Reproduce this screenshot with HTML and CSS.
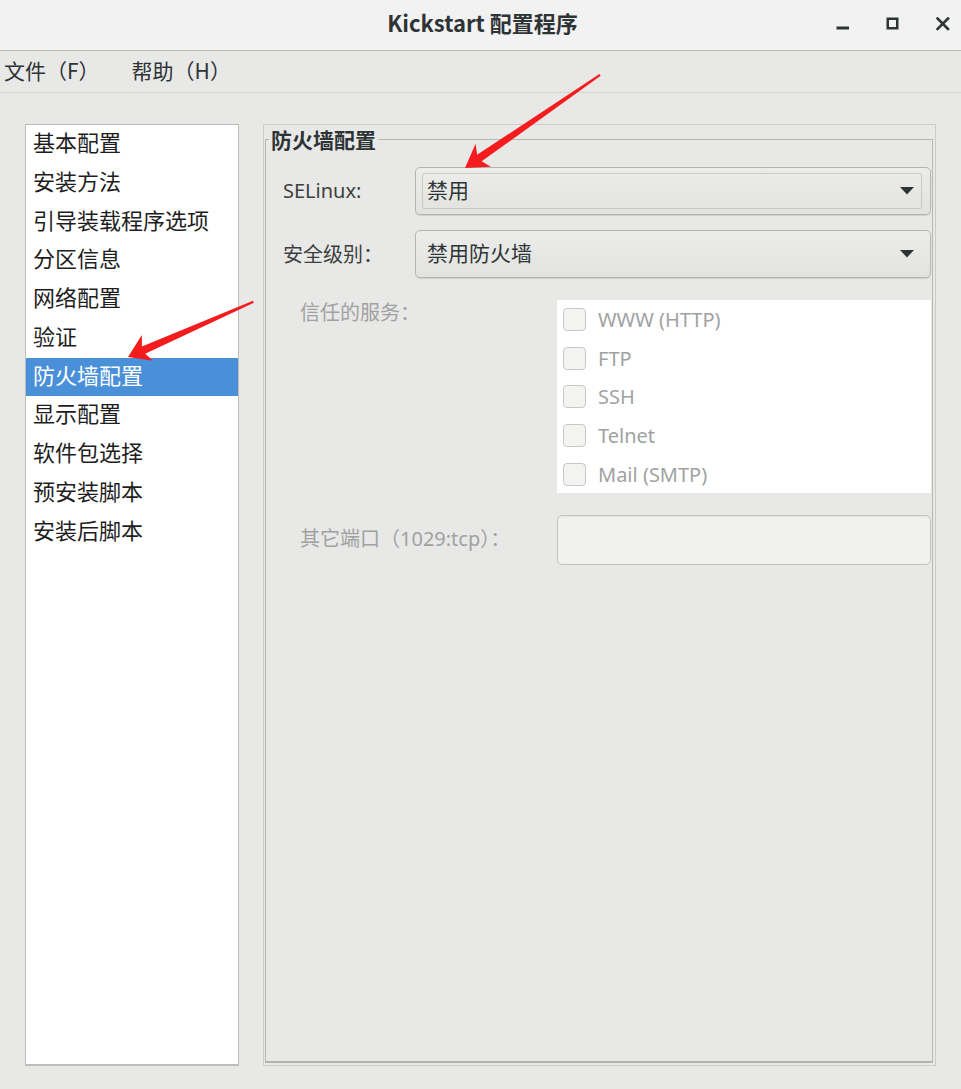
FILE: index.html
```html
<!DOCTYPE html>
<html lang="zh-CN">
<head>
<meta charset="utf-8">
<title>Kickstart 配置程序</title>
<link rel="stylesheet" href="styles.css">
</head>
<body>
<div class="window">
  <header class="titlebar">
    <div class="title-spacer"></div>
    <div class="title">Kickstart 配置程序</div>
    <div class="wm-buttons">
      <span class="wm-btn">
        <svg width="14" height="14" viewBox="0 0 14 14"><rect x="0.5" y="9.5" width="12.5" height="3" fill="#2e3436"/></svg>
      </span>
      <span class="wm-btn">
        <svg width="14" height="14" viewBox="0 0 14 14"><rect x="1.75" y="1.75" width="9.5" height="9.5" fill="none" stroke="#2e3436" stroke-width="2.5"/></svg>
      </span>
      <span class="wm-btn">
        <svg width="14" height="14" viewBox="0 0 14 14"><path d="M1.5 1.5 L12 12 M12 1.5 L1.5 12" stroke="#2e3436" stroke-width="2.6" stroke-linecap="square"/></svg>
      </span>
    </div>
  </header>

  <nav class="menubar">
    <span class="menu-item">文件（F）</span>
    <span class="menu-item">帮助（H）</span>
  </nav>

  <main class="content">
    <ul class="sidebar">
      <li class="side-item">基本配置</li>
      <li class="side-item">安装方法</li>
      <li class="side-item">引导装载程序选项</li>
      <li class="side-item">分区信息</li>
      <li class="side-item">网络配置</li>
      <li class="side-item">验证</li>
      <li class="side-item selected">防火墙配置</li>
      <li class="side-item">显示配置</li>
      <li class="side-item">软件包选择</li>
      <li class="side-item">预安装脚本</li>
      <li class="side-item">安装后脚本</li>
    </ul>

    <section class="panel">
      <fieldset class="frame">
        <legend class="frame-title">防火墙配置</legend>

        <div class="row row-combo">
          <span class="field-label">SELinux:</span>
          <div class="combo">
            <div class="combo-focus">
              <span class="combo-text">禁用</span>
              <svg class="combo-arrow" width="14" height="8" viewBox="0 0 14 8"><path d="M0 0 H14 L7 7.5 Z" fill="#2e3436"/></svg>
            </div>
          </div>
        </div>

        <div class="row row-combo">
          <span class="field-label">安全级别：</span>
          <div class="combo">
            <div class="combo-plain">
              <span class="combo-text">禁用防火墙</span>
              <svg class="combo-arrow" width="14" height="8" viewBox="0 0 14 8"><path d="M0 0 H14 L7 7.5 Z" fill="#2e3436"/></svg>
            </div>
          </div>
        </div>

        <div class="row row-wide row-services">
          <span class="field-label insensitive">信任的服务：</span>
          <div class="services">
            <label class="check-row"><span class="check-box"></span><span class="check-label">WWW (HTTP)</span></label>
            <label class="check-row"><span class="check-box"></span><span class="check-label">FTP</span></label>
            <label class="check-row"><span class="check-box"></span><span class="check-label">SSH</span></label>
            <label class="check-row"><span class="check-box"></span><span class="check-label">Telnet</span></label>
            <label class="check-row"><span class="check-box"></span><span class="check-label">Mail (SMTP)</span></label>
          </div>
        </div>

        <div class="row row-wide row-port">
          <span class="field-label insensitive">其它端口（1029:tcp）：</span>
          <div class="entry"></div>
        </div>
      </fieldset>
    </section>
  </main>

  <svg class="annotations" width="961" height="1089" viewBox="0 0 961 1089">
    <g transform="translate(465 168) rotate(-34.56)">
      <polygon points="0,0 22.5,-14 17.5,-4 164,-1.1 164,1.1 17.5,4 22,13.5" fill="#f41c1c"/>
    </g>
    <g transform="translate(128 357) rotate(-23.75)">
      <polygon points="0,0 21.5,-14.5 17,-4 137,-1.1 137,1.1 17,4 21.5,13.5" fill="#f41c1c"/>
    </g>
  </svg>
</div>
</body>
</html>
```

FILE: styles.css
```css
* {
  box-sizing: border-box;
}

html, body {
  margin: 0;
  padding: 0;
}

body {
  background: #e8e8e7;
  font-family: "Noto Sans", "Noto Sans CJK SC", sans-serif;
  color: #2e3436;
}

.window {
  position: relative;
  width: 961px;
  height: 1089px;
  overflow: hidden;
  background: #e8e8e7;
}

/* ---------- title bar ---------- */
.titlebar {
  height: 51px;
  display: grid;
  grid-template-columns: 1fr auto 1fr;
  align-items: center;
  background: #f2f2f2;
  border-bottom: 1px solid #b8b8b5;
  box-shadow: 0 1px 0 #d6d6d4;
}

.title {
  font-family: "Noto Sans CJK SC", sans-serif;
  font-size: 22px;
  font-weight: 700;
  color: #2e3436;
  padding-left: 4px;
  padding-bottom: 6px;
}

.wm-buttons {
  display: flex;
  justify-content: flex-end;
  gap: 14px;
  padding-bottom: 2px;
}

.wm-btn {
  width: 36px;
  height: 20px;
  display: flex;
  align-items: center;
  justify-content: center;
}

/* ---------- menu bar ---------- */
.menubar {
  height: 42px;
  display: flex;
  align-items: center;
  gap: 32px;
  padding-left: 4px;
  padding-bottom: 3px;
  border-bottom: 1px solid #d4d4d2;
  background: #e8e8e7;
}

.menu-item {
  font-family: "Noto Sans CJK SC", sans-serif;
  font-size: 21px;
  color: #2e3436;
}

/* ---------- content ---------- */
.content {
  display: flex;
  gap: 24px;
  padding: 31px 0 0 25px;
}

.sidebar {
  list-style: none;
  margin: 0;
  padding: 0;
  width: 214px;
  height: 942px;
  background: #ffffff;
  border: 1px solid #bdbdba;
  border-bottom-width: 2px;
}

.side-item {
  height: 38.75px;
  line-height: 33px;
  padding-left: 7px;
  font-family: "Noto Sans CJK SC", sans-serif;
  font-size: 22px;
  color: #1e1e1e;
  white-space: nowrap;
}

.side-item.selected {
  background: #4a90d9;
  color: #ffffff;
}

.panel {
  width: 673px;
  height: 942px;
  border: 1px solid #cbcbc8;
  padding: 2px 2px 2px 1px;
  display: flex;
}

.frame {
  flex: 1;
  margin: 0;
  min-width: 0;
  padding: 16px 1px 0 17px;
  border: 1px solid #b6b6b3;
  border-bottom: 2px solid #b3b3b0;
}

.frame-title {
  padding: 0 2px 0 2px;
  margin-left: -14px;
  font-family: "Noto Sans CJK SC", sans-serif;
  font-weight: 700;
  font-size: 21px;
  line-height: 24px;
  color: #2e3436;
}

.row {
  display: grid;
  grid-template-columns: 132px 1fr;
  align-items: center;
}

.row-combo + .row-combo {
  margin-top: 15px;
}

.row-wide {
  grid-template-columns: 274px 1fr;
}

.row-services {
  margin-top: 22px;
  align-items: start;
}

.row-port {
  margin-top: 22px;
}

.field-label {
  font-size: 20px;
  color: #3c3f40;
  white-space: nowrap;
  padding-bottom: 2px;
}

.field-label.insensitive {
  padding-left: 17px;
  color: #a0a2a2;
  line-height: 26px;
}

/* combo boxes */
.combo {
  height: 48px;
  border: 1px solid #b4b4b1;
  border-radius: 5px;
  background: linear-gradient(#ececea, #e2e2df);
  box-shadow: 0 1px 1px rgba(0, 0, 0, 0.12);
  padding: 5px 8px 5px 6px;
  display: flex;
}

.combo-focus,
.combo-plain {
  flex: 1;
  display: flex;
  align-items: center;
  justify-content: space-between;
  padding: 0 7px 0 4px;
  border: 1px solid transparent;
  border-radius: 2px;
}

.combo-focus {
  border-color: #c9c9c6;
}

.combo-text {
  font-family: "Noto Sans CJK SC", sans-serif;
  font-size: 21px;
  line-height: 26px;
  padding-bottom: 5px;
  color: #2e3436;
}

/* check list */
.services {
  background: #ffffff;
  height: 193px;
  padding-left: 6px;
}

.check-row {
  height: 38.75px;
  display: flex;
  align-items: center;
  gap: 12px;
}

.check-box {
  width: 23px;
  height: 23px;
  border: 1px solid #c8c8c6;
  border-radius: 4px;
  background: #f3f3f2;
}

.check-label {
  font-size: 20px;
  color: #a0a2a2;
}

/* entry */
.entry {
  height: 50px;
  border: 1px solid #c2c2bf;
  border-radius: 5px;
  background: #f1f1f0;
  box-shadow: inset 0 1px 1px rgba(0, 0, 0, 0.06);
}

/* annotations */
.annotations {
  position: absolute;
  left: 0;
  top: 0;
  pointer-events: none;
}
```
